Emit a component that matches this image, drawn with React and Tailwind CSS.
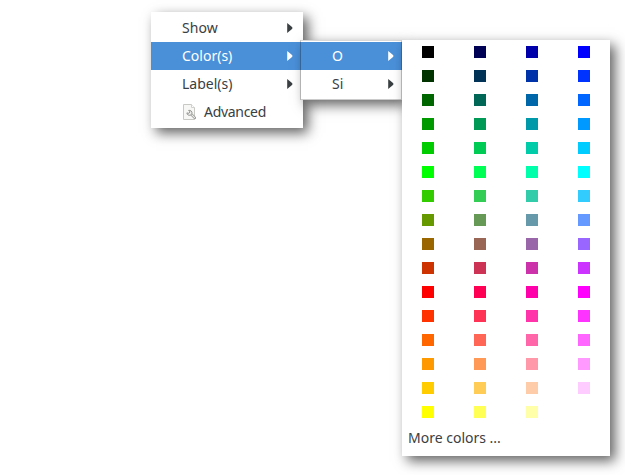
const LEVELS = ['00', '55', 'aa', 'ff'];
const BASES = [
  '0000', '0033', '0066', '0099', '00cc', '00ff', '33cc', '6699',
  '9966', 'cc33', 'ff00', 'ff33', 'ff66', 'ff99', 'ffcc', 'ffff',
];

const SHADOW = 'shadow-[5px_5px_12px_rgba(0,0,0,0.62)]';

function Arrow() {
  return (
    <svg className="ml-auto shrink-0" width="6" height="10" viewBox="0 0 6 10" fill="currentColor">
      <path d="M.2 0 L5.3 4.3 V5.7 L.2 10 Z" />
    </svg>
  );
}

function ToolIcon() {
  return (
    <svg className="mr-[7px] shrink-0" width="14" height="16" viewBox="0 0 14 16" fill="none">
      <path d="M1.5 .5 H9.5 L12.5 3.5 V15.5 H1.5 Z" fill="#f7f7f5" stroke="#c8c9c5" />
      <path d="M9.5 .5 V3.5 H12.5" stroke="#d0d1cd" fill="#fff" />
      <path d="M9.6 10.6 L12.8 13.8" stroke="#969793" strokeWidth="2.6" strokeLinecap="round" />
      <path d="M9.6 10.6 L12.6 13.6" stroke="#ecedea" strokeWidth="1.1" strokeLinecap="round" />
      <path d="M6.6 6.4 L8 7.9 L6.9 9.3 L4.9 8.9 C4.9 10.8 6.8 11.8 8.4 11.1 L10 9.6 C10.4 7.5 8.7 5.9 6.6 6.4 Z" fill="#eeeeec" stroke="#8b8d89" strokeWidth=".9" />
    </svg>
  );
}

function Item({ label, active, icon, arrow = true, className = '' }) {
  return (
    <div className={`flex h-7 items-center ${active ? 'bg-[#4a90d9] text-white' : ''} ${className}`}>
      {icon}
      <span className="whitespace-pre">{label}</span>
      {arrow && <Arrow />}
    </div>
  );
}

export default function App() {
  return (
    <div className="relative h-[475px] w-[625px] overflow-hidden bg-white font-['Noto_Sans','Open_Sans',sans-serif] text-[14px] leading-7 text-[#3a4042]">
      <div className={`absolute left-[151px] top-3 w-[152px] bg-white py-0.5 ${SHADOW}`}>
        <Item label="Show" className="pl-[31px] pr-2.5 tracking-[0.1px]" />
        <Item label="Color(s)" active className="pl-[31px] pr-2.5" />
        <Item label="Label(s)" className="pl-[31px] pr-2.5" />
        <Item label="Advanced" arrow={false} icon={<ToolIcon />} className="pl-[31px] tracking-[-0.3px] [&>span]:ml-px" />
      </div>
      <div className={`absolute left-[301px] top-10 w-[101px] bg-white py-0.5 ${SHADOW}`}>
        <Item label="O" active className="pl-[31px] pr-2" />
        <Item label="Si" className="pl-[31px] pr-2" />
        <div className="absolute inset-y-0 -left-px right-0 border border-black/20 border-t-black/15" />
      </div>
      <div className={`absolute left-[402px] top-10 h-[416px] w-[208px] bg-white ${SHADOW}`}>
        <div className="grid grid-cols-4">
          {BASES.flatMap((base) =>
            LEVELS.map((blue) => (
              <div key={base + blue} className="flex h-6 items-center justify-center">
                <div className="size-3" style={{ backgroundColor: `#${base}${blue}` }} />
              </div>
            ))
          )}
        </div>
        <div className="pl-1.5 leading-7">More colors ...</div>
      </div>
    </div>
  );
}
